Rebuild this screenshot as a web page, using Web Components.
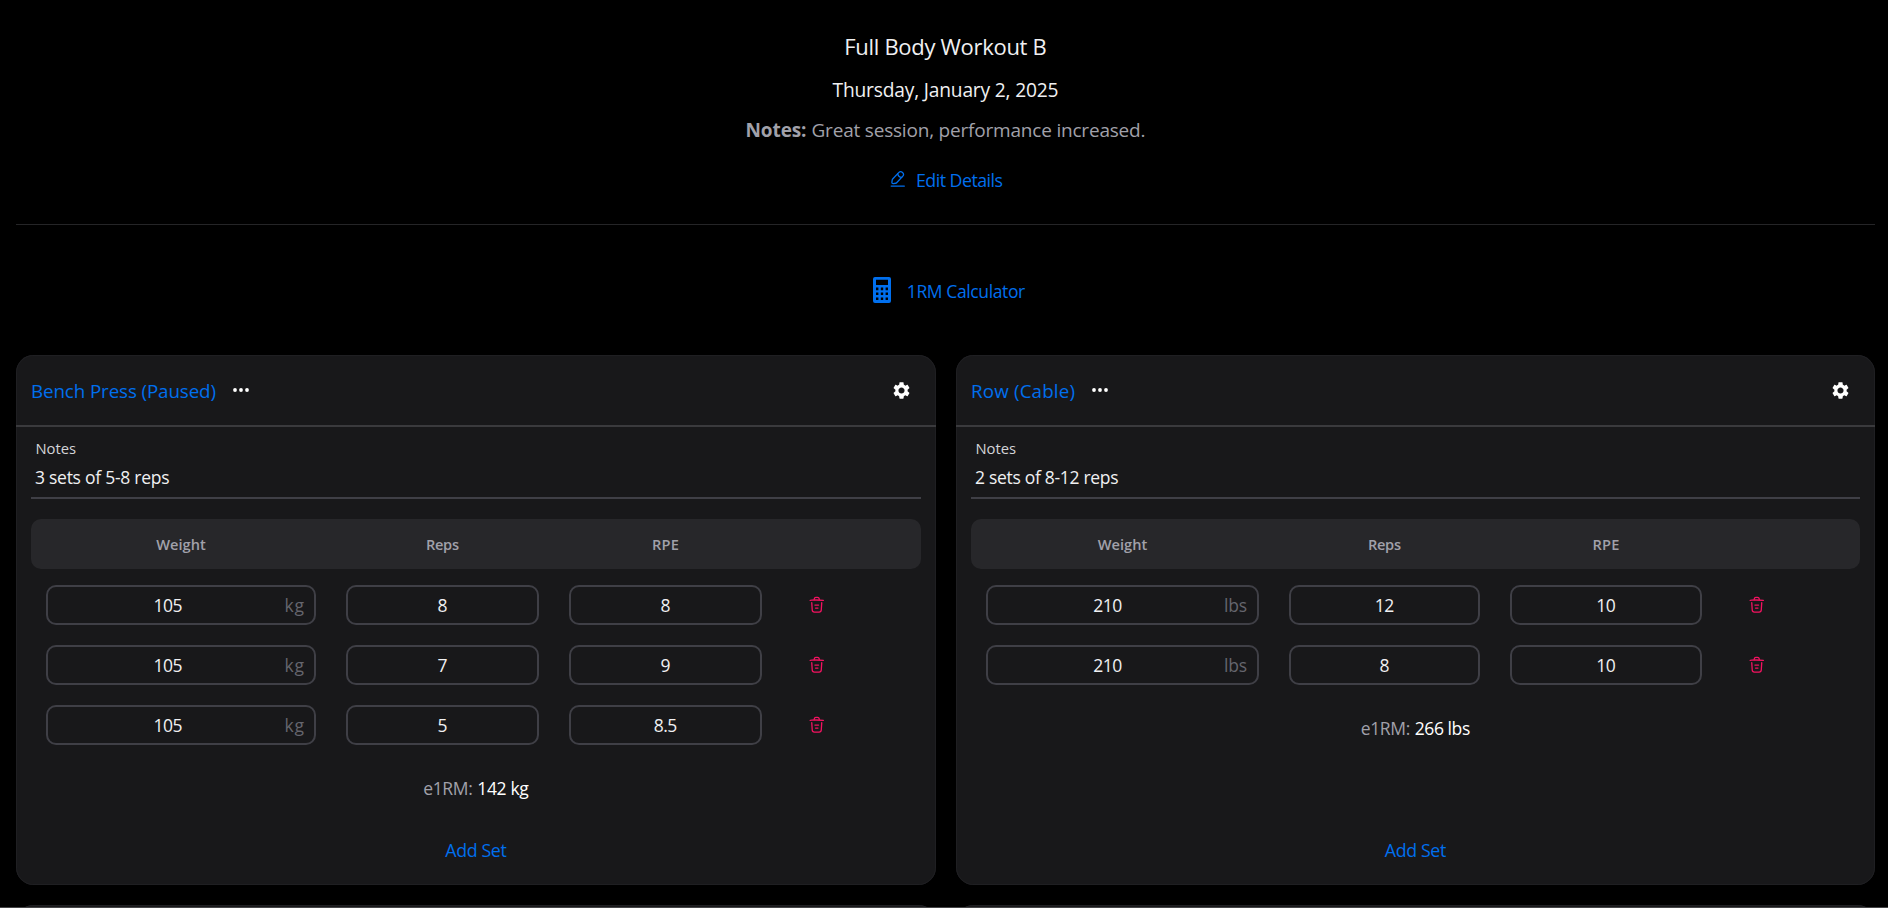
<!DOCTYPE html>
<html lang="en">
<head>
<meta charset="utf-8">
<title>Full Body Workout B</title>
<style>
html,body{margin:0;background:#000;overflow:hidden}
body{font-family:"Open Sans","Noto Sans",sans-serif;color:#f0f0f2}
</style>
</head>
<body>
<workout-page></workout-page>
<script>
/* Single line of text tracked to a given advance width: size, w, lh attributes. */
class FitText extends HTMLElement {
  connectedCallback() {
    const root = this.shadowRoot || this.attachShadow({ mode: 'open' });
    const size = this.getAttribute('size'), lh = this.getAttribute('lh') || 24;
    root.innerHTML = `<style>:host{display:block;width:max-content;white-space:pre;font-size:${size}px;line-height:${lh}px}
      span{display:inline-block}</style><span><slot></slot></span>`;
    const span = root.querySelector('span'), w = +this.getAttribute('w'), n = this.textContent.length;
    if (w && n > 1) {
      const ls = (w - span.getBoundingClientRect().width) / (n - 1);
      span.style.letterSpacing = ls + 'px';
      span.style.marginRight = -ls + 'px';
    }
  }
}

const ICONS = {
  edit: ['0 0 20 20', 17.5, 17.5, `<g fill="none" stroke="currentColor" stroke-width="1.5" stroke-linecap="round" stroke-linejoin="round"><path d="M11.05 3.00002L4.20835 10.2417C3.95002 10.5167 3.70002 11.0584 3.65002 11.4334L3.34169 14.1334C3.23335 15.1084 3.93335 15.775 4.90002 15.6084L7.58335 15.15C7.95835 15.0834 8.48335 14.8084 8.74168 14.525L15.5834 7.28335C16.7667 6.03335 17.3 4.60835 15.4583 2.86668C13.625 1.14168 12.2334 1.75002 11.05 3.00002Z"/><path d="M9.90833 4.20831C10.2667 6.50831 12.1333 8.26665 14.45 8.49998"/><path d="M2.5 18.3333H17.5"/></g>`],
  trash: ['0 0 20 20', 17.5, 17.5, `<g fill="none" stroke="currentColor" stroke-width="1.5" stroke-linecap="round" stroke-linejoin="round"><path d="M17.5 4.98332C14.725 4.70832 11.9333 4.56665 9.15 4.56665C7.5 4.56665 5.85 4.64998 4.2 4.81665L2.5 4.98332"/><path d="M7.08331 4.14169L7.26665 3.05002C7.39998 2.25835 7.49998 1.66669 8.90831 1.66669H11.0916C12.5 1.66669 12.6083 2.29169 12.7333 3.05835L12.9166 4.14169"/><path d="M15.7084 7.61664L15.1667 16.0083C15.075 17.3166 15 18.3333 12.675 18.3333H7.32502C5.00002 18.3333 4.92502 17.3166 4.83335 16.0083L4.29169 7.61664"/><path d="M8.60834 13.75H11.3833"/><path d="M7.91669 10.4167H12.0833"/></g>`],
  calc: ['0 0 18 26', 18, 26, `<path fill="currentColor" fill-rule="evenodd" d="M2 0H16a2 2 0 0 1 2 2V24a2 2 0 0 1-2 2H2a2 2 0 0 1-2-2V2a2 2 0 0 1 2-2ZM3 2.8V8H15V2.8ZM3 10.5V13.2H5.4V10.5ZM7.8 10.5V13.2H10.2V10.5ZM12.6 10.5V13.2H15V10.5ZM3 15.4V18.1H5.4V15.4ZM7.8 15.4V18.1H10.2V15.4ZM12.6 15.4V18.1H15V15.4ZM3 20.4V23.1H5.4V20.4ZM7.8 20.4V23.1H10.2V20.4ZM12.6 20.4V23.1H15V20.4Z"/>`],
  dots: ['0 0 16 4', 16, 4, `<g fill="currentColor"><circle cx="2" cy="2" r="1.9"/><circle cx="8" cy="2" r="1.9"/><circle cx="14" cy="2" r="1.9"/></g>`],
  gear: ['2 2 20 20', 17, 17, `<path fill="currentColor" d="M19.14 12.94c.04-.3.06-.61.06-.94 0-.32-.02-.64-.07-.94l2.03-1.58c.18-.14.23-.41.12-.61l-1.92-3.32c-.12-.22-.37-.29-.59-.22l-2.39.96c-.5-.38-1.03-.7-1.62-.94l-.36-2.54c-.04-.24-.24-.41-.48-.41h-3.84c-.24 0-.43.17-.47.41l-.36 2.54c-.59.24-1.13.57-1.62.94l-2.39-.96c-.22-.08-.47 0-.59.22L2.74 8.87c-.12.21-.08.47.12.61l2.03 1.58c-.05.3-.09.63-.09.94s.02.64.07.94l-2.03 1.58c-.18.14-.23.41-.12.61l1.92 3.32c.12.22.37.29.59.22l2.39-.96c.5.38 1.03.7 1.62.94l.36 2.54c.05.24.24.41.48.41h3.84c.24 0 .44-.17.47-.41l.36-2.54c.59-.24 1.13-.56 1.62-.94l2.39.96c.22.08.47 0 .59-.22l1.92-3.32c.12-.22.07-.47-.12-.61l-2.01-1.58zM12 15.6c-1.98 0-3.6-1.62-3.6-3.6s1.62-3.6 3.6-3.6 3.6 1.62 3.6 3.6-1.62 3.6-3.6 3.6z"/>`]
};
class UiIcon extends HTMLElement {
  connectedCallback() {
    const [vb, w, h, body] = ICONS[this.getAttribute('name')];
    (this.shadowRoot || this.attachShadow({ mode: 'open' })).innerHTML =
      `<style>:host{display:block;flex:none;width:${w}px;height:${h}px}svg{display:block}</style><svg viewBox="${vb}" width="${w}" height="${h}">${body}</svg>`;
  }
}

/* Bordered number field with an optional unit at its right end. */
class SetField extends HTMLElement {
  connectedCallback() {
    const v = this.getAttribute('value'), unit = this.getAttribute('unit');
    const w = v.includes('.') ? 23.5 : v.length * 9.7;
    (this.shadowRoot || this.attachShadow({ mode: 'open' })).innerHTML = `
      <style>:host{display:flex;box-sizing:border-box;height:40px;border:2px solid #3f3f46;border-radius:10px;padding:0 10px;align-items:center}
      .v{flex:1;display:flex;justify-content:center}.u{color:#65656d;margin-left:6.5px}</style>
      <div class="v"><fit-text size="17.5" w="${w}">${v}</fit-text></div>
      ${unit ? `<fit-text class="u" size="17.5" w="${unit === 'kg' ? 19.5 : 23}">${unit}</fit-text>` : ''}`;
  }
}

class ExerciseCard extends HTMLElement {
  connectedCallback() {
    const a = n => this.getAttribute(n), unit = a('unit');
    const rows = a('sets').split(';').map(r => r.split(','));
    (this.shadowRoot || this.attachShadow({ mode: 'open' })).innerHTML = `
      <style>
      :host{display:flex;flex-direction:column;box-sizing:border-box;height:530px;background:#18181a;border-radius:17.5px;box-shadow:inset 0 0 0 1px #1f1f22}
      header{height:70px;border-bottom:2px solid #3a3a3d;display:flex;align-items:center;padding:0 26px 0 15px}
      header fit-text{color:#006fee;position:relative;top:1px}
      header ui-icon{color:#fff}
      .dots{margin-left:17px}.gear{margin-left:auto}
      .main{padding:0 15px;display:flex;flex-direction:column;flex:1}
      .note{height:70px;border-bottom:2px solid #3f3f46;padding:0 4px;display:flex;flex-direction:column}
      .label{margin:10px 0 0 .5px;color:#d4d4d8}
      .value{margin-top:4px}
      .grid{display:grid;grid-template-columns:${a('cols')}}
      .head{margin-top:20px;height:50px;border-radius:10px;background:#27272a;color:#a1a1aa;font-weight:600;place-items:center}
      .head fit-text{margin-top:-1px}
      .rows{padding-top:6px}
      .row{height:60px;align-items:center}
      .row set-field{margin:0 15px}
      .row ui-icon{color:#f31260;margin-left:31px}
      .est{display:flex;justify-content:center;gap:4.5px;margin-top:21px;color:#fff}
      .est .k{color:#a1a1aa}
      .add{margin:auto auto 23px;color:#006fee}
      </style>
      <header><fit-text size="18.8" w="${a('name-w')}">${a('name')}</fit-text><ui-icon class="dots" name="dots"></ui-icon><ui-icon class="gear" name="gear"></ui-icon></header>
      <div class="main">
        <div class="note"><fit-text class="label" size="14.8" lh="23" w="40.5">Notes</fit-text><fit-text class="value" size="17.5" lh="26" w="${a('note-w')}">${a('note')}</fit-text></div>
        <div class="grid head"><fit-text size="14.6" w="49.5">Weight</fit-text><fit-text size="14.6" w="33">Reps</fit-text><fit-text size="14.6" w="27">RPE</fit-text><span></span></div>
        <div class="rows">${rows.map(r => `<div class="grid row"><set-field value="${r[0]}" unit="${unit}"></set-field><set-field value="${r[1]}"></set-field><set-field value="${r[2]}"></set-field><ui-icon name="trash"></ui-icon></div>`).join('')}</div>
        <div class="est"><fit-text class="k" size="17.5" w="49.5">e1RM:</fit-text><fit-text size="17.5" w="${a('est-w')}">${a('est')}</fit-text></div>
        <fit-text class="add" size="17.8" w="61.5">Add Set</fit-text>
      </div>`;
  }
}

class WorkoutPage extends HTMLElement {
  connectedCallback() {
    this.attachShadow({ mode: 'open' }).innerHTML = `
      <style>
      :host{display:flex;flex-direction:column;height:908px;overflow:hidden;box-sizing:border-box;padding:0 13px 0 16px;position:relative}
      .top,.calc,.cards{flex:none}
      .top{height:224px;border-bottom:1px solid #252527;display:flex;flex-direction:column;align-items:center}
      .title{margin-top:31px}.date{margin-top:13px}
      .notes{display:flex;gap:5px;color:#a1a1aa;margin-top:10px}
      .notes .b{font-weight:700}
      .link{display:flex;align-items:center;color:#006fee}
      .edit{margin-top:20px;height:30px;gap:9.25px;padding-left:1.25px}
      .edit ui-icon{margin-top:-3px}
      .calc{height:40px;margin-top:45px;justify-content:center;gap:16px;padding-left:7px}
      .calc fit-text{margin-top:1px}
      .cards{display:grid;grid-template-columns:920px 919px;column-gap:20px;margin-top:45px}
      .next{height:60px;border-radius:17.5px;background:#18181a;box-shadow:inset 0 0 0 1px #1f1f22;margin-top:20px}
      .edge{position:absolute;left:0;right:0;bottom:0;height:1px;background:#454547}
      </style>
      <div class="top">
        <fit-text class="title" size="22" lh="31" w="202.5">Full Body Workout B</fit-text>
        <fit-text class="date" size="19.2" lh="30" w="226">Thursday, January 2, 2025</fit-text>
        <div class="notes"><fit-text class="b" size="19" lh="30" w="61">Notes:</fit-text><fit-text size="19" lh="30" w="334">Great session, performance increased.</fit-text></div>
        <div class="link edit"><ui-icon name="edit"></ui-icon><fit-text size="17.8" w="87">Edit Details</fit-text></div>
      </div>
      <div class="link calc"><ui-icon name="calc"></ui-icon><fit-text size="17.5" w="118.5">1RM Calculator</fit-text></div>
      <div class="cards">
        <exercise-card name="Bench Press (Paused)" name-w="185" note="3 sets of 5-8 reps" note-w="134.5" unit="kg" cols="300px 223px 223px 1fr" sets="105,8,8;105,7,9;105,5,8.5" est="142 kg" est-w="51.5"></exercise-card>
        <exercise-card name="Row (Cable)" name-w="104" note="2 sets of 8-12 reps" note-w="143.5" unit="lbs" cols="303px 221px 222px 1fr" sets="210,12,10;210,8,10" est="266 lbs" est-w="55.5"></exercise-card>
        <div class="next"></div><div class="next"></div>
      </div>
      <div class="edge"></div>`;
  }
}
customElements.define('fit-text', FitText);
customElements.define('ui-icon', UiIcon);
customElements.define('set-field', SetField);
customElements.define('exercise-card', ExerciseCard);
customElements.define('workout-page', WorkoutPage);
</script>
</body>
</html>
